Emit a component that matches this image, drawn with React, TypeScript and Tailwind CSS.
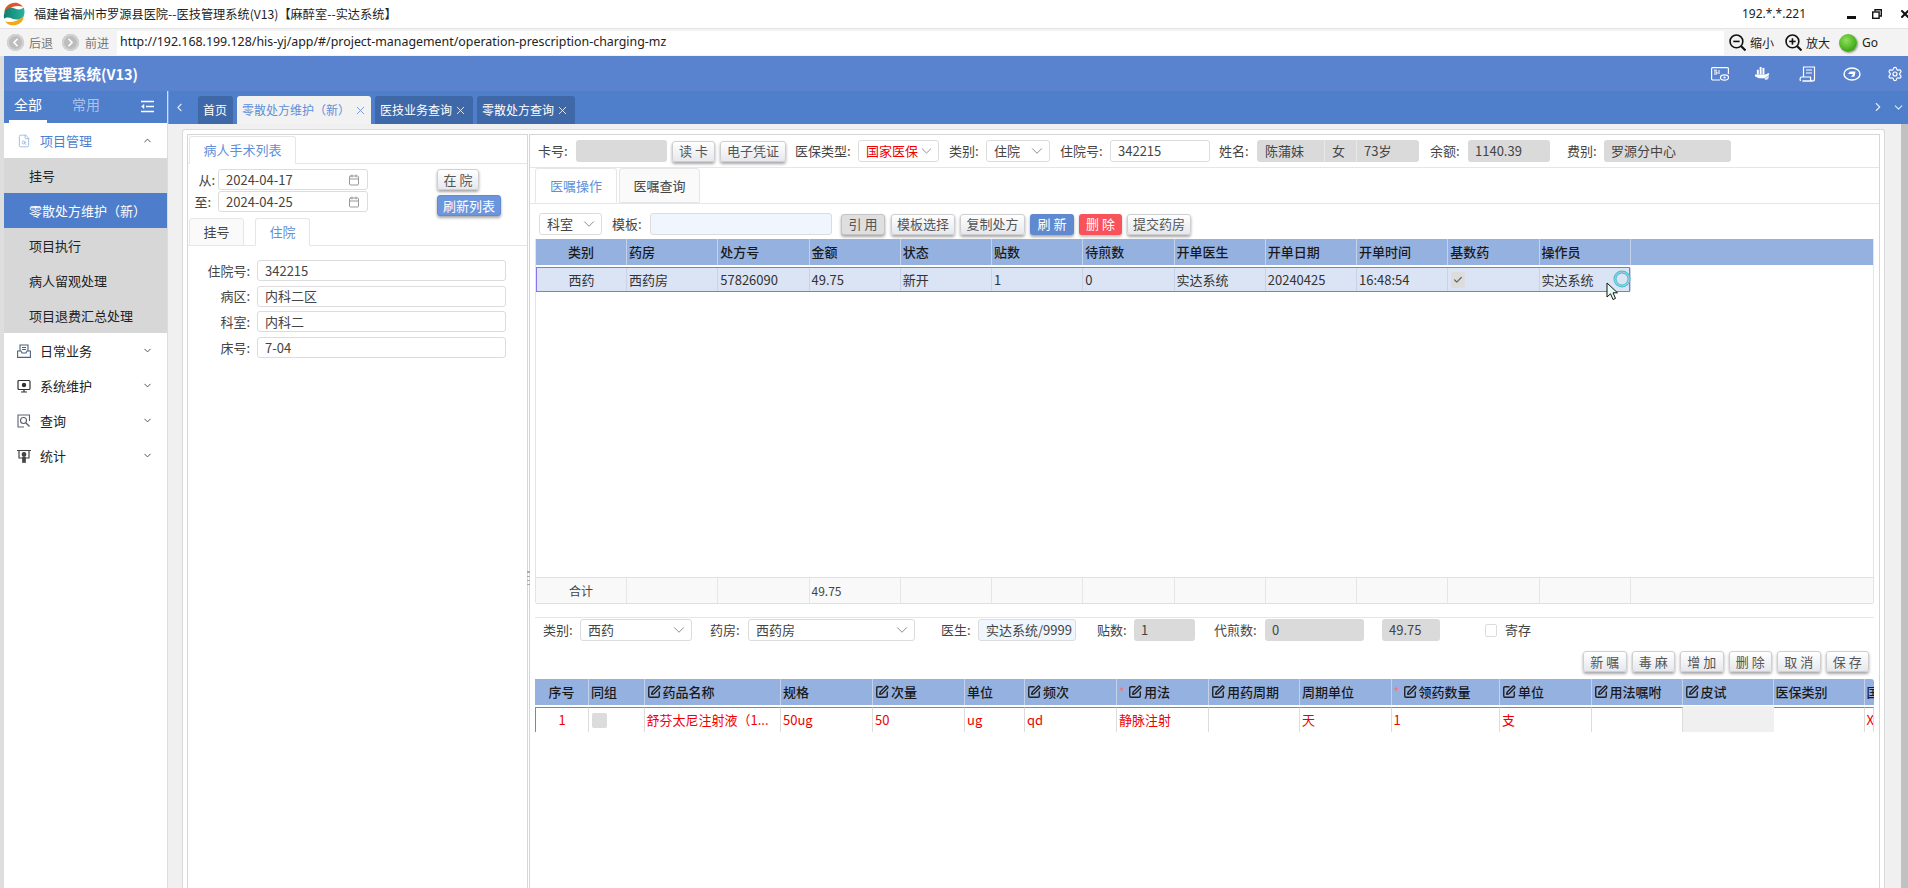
import React from 'react';
import { Calendar, Check, ChevronDown, ChevronUp, ChevronLeft, ChevronRight, FileSearch, Settings, SquarePen, X } from 'lucide-react';

const BTN_BASE = 'h-[21px] shrink-0 flex items-center justify-center rounded-[3px] border text-[#555] text-[13px] shadow-[0_2px_3px_rgba(0,0,0,0.35)]';
const BTN = `${BTN_BASE} border-[#cfcfcf] bg-gradient-to-b from-white to-[#e6e8ee]`;
const INPUT = 'shrink-0 flex items-center rounded-[3px] border border-[#dcdcdc] px-[7px] text-[13px] whitespace-nowrap';
const GRAY = 'h-[22px] shrink-0 flex items-center rounded-[3px] bg-[#dadada] text-[#444] text-[13px]';
const LABEL = 'shrink-0 text-[#444] text-[13px] whitespace-nowrap';

const Logo = () => (
  <svg viewBox="0 0 30 30" className="w-[24px] h-[24px]">
    <defs>
      <linearGradient id="logoTeal" x1="0" y1="0" x2="1" y2="0">
        <stop offset="0" stopColor="#0f7f6e" />
        <stop offset="1" stopColor="#27b3a0" />
      </linearGradient>
    </defs>
    <path d="M3 13C3 5 11 0 18 1C22 2 25 4 26 6C20 4 13 5 9 9C7 11 4 14 3 13Z" fill="#e2552b" />
    <path d="M3 14C4 8 11 6 16 8C20 10 24 10 27 7C29 11 28 16 27 18C24 22 18 23 13 21C9 19 5 19 3 21C2 19 2 16 3 14Z" fill="url(#logoTeal)" />
    <path d="M27 19C27 25 19 30 12 29C8 28.5 5 26 4 24C10 26 17 25 21 22C23 20.5 26 18 27 19Z" fill="#f2a81d" />
  </svg>
);

const NavBall = ({ dir }: { dir: 'l' | 'r' }) => (
  <span className="w-[17px] h-[17px] rounded-full bg-[#bdbdbd] shadow-[inset_0_0_0_2px_#d2d2d2] flex items-center justify-center text-white">
    {dir === 'l' ? <ChevronLeft size={13} strokeWidth={3} /> : <ChevronRight size={13} strokeWidth={3} />}
  </span>
);

const Zoom = ({ plus }: { plus?: boolean }) => (
  <svg viewBox="0 0 16 16" className="w-[17px] h-[17px]" fill="none" stroke="#111" strokeWidth="1.5">
    <circle cx="7" cy="7" r="6" />
    <path d="M11.5 11.5L15.5 15.5" strokeWidth="2" />
    <path d="M4 7H10" />
    {plus && <path d="M7 4V10" />}
  </svg>
);

const TitleBar = () => (
  <div className="h-[28px] flex items-center bg-white">
    <span className="ml-[2px] flex"><Logo /></span>
    <span className="ml-[8px] text-[12.2px] text-[#222] whitespace-nowrap">福建省福州市罗源县医院--医技管理系统(V13)【麻醉室--实达系统】</span>
    <span className="ml-auto text-[12px] text-[#222] font-['Noto_Sans',sans-serif]">192.*.*.221</span>
    <span className="ml-[41px] w-[9px] h-[3px] mt-[7px] bg-[#111]" />
    <svg viewBox="0 0 10 10" className="ml-[16px] w-[10px] h-[10px]" fill="none" stroke="#111" strokeWidth="1.4">
      <path d="M3 2.5V0.7H9.3V7H7.3" />
      <rect x="0.7" y="3" width="6.4" height="6.3" />
    </svg>
    <X size={12} strokeWidth={4} className="ml-[17px] mr-[-3px] text-[#111]" />
  </div>
);

const AddressBar = () => (
  <div className="h-[28px] flex items-center bg-[#f3f3f3] border-t border-[#e4e4e4] text-[13px]">
    <span className="ml-[7px]"><NavBall dir="l" /></span>
    <span className="ml-[5px] w-[24px] text-[#777] whitespace-nowrap text-[12px]">后退</span>
    <span className="ml-[9px]"><NavBall dir="r" /></span>
    <span className="ml-[6px] w-[24px] text-[#777] whitespace-nowrap text-[12px]">前进</span>
    <div className="ml-[8px] w-[1607px] h-[24px] bg-white flex items-center pl-[3px] text-[#222] font-['Noto_Sans',sans-serif] text-[12.4px] whitespace-nowrap">
      http://192.168.199.128/his-yj/app/#/project-management/operation-prescription-charging-mz
    </div>
    <span className="ml-[5px]"><Zoom /></span>
    <span className="ml-[4px] text-[12px] text-[#222] whitespace-nowrap">缩小</span>
    <span className="ml-[11px]"><Zoom plus /></span>
    <span className="ml-[4px] text-[12px] text-[#222] whitespace-nowrap">放大</span>
    <span className="ml-[9px] w-[18px] h-[18px] rounded-full bg-[radial-gradient(circle_at_40%_35%,#8fe05a,#3da814_70%,#2a7d0c)] shadow-[1px_1px_2px_rgba(0,0,0,0.4)]" />
    <span className="ml-[5px] text-[12px] text-[#222] font-['Noto_Sans',sans-serif]">Go</span>
  </div>
);

const HeaderIcons = () => (
  <div className="ml-auto flex items-center text-white">
    <svg viewBox="0 0 18 14" className="w-[18px] h-[14px]" fill="none" stroke="white" strokeWidth="1.2">
      <path d="M9 13H1.5A1 1 0 0 1 .6 12V1.5A1 1 0 0 1 1.5 .6H16.5A1 1 0 0 1 17.4 1.5V7" />
      <path d="M3 3.2H6M3 5H6V7H3" strokeWidth="1" />
      <path d="M8 3V7" strokeWidth="1" />
      <ellipse cx="13.5" cy="10.5" rx="4" ry="2.6" fill="#5983cf" />
      <circle cx="13.5" cy="10.5" r="1.1" fill="white" stroke="none" />
    </svg>
    <svg viewBox="0 0 16 16" className="ml-[26px] w-[15px] h-[15px]" fill="white">
      <rect x="2" y="4" width="2" height="5" />
      <rect x="5" y="1" width="2" height="8" />
      <rect x="8" y="2" width="2" height="7" />
      <path d="M0 9H11L15 7.5V9.5L10 13H4L0 11Z" />
      <path d="M10 13L15 10L14 14L11 15Z" opacity=".8" />
    </svg>
    <svg viewBox="0 0 16 16" className="ml-[29px] w-[17px] h-[16px]" fill="none" stroke="white" strokeWidth="1.2">
      <path d="M4 11V1H15V13A2 2 0 0 1 13 15H3" />
      <path d="M1 15C.2 13 .6 11.3 2 11H11V13C11 14 11.6 15 13 15H3" />
      <path d="M6.5 4H12.5M6.5 7H12.5" />
    </svg>
    <svg viewBox="0 0 18 14" className="ml-[27px] w-[18px] h-[14px]" fill="none" stroke="white" strokeWidth="1.4">
      <ellipse cx="9" cy="7" rx="8" ry="6" />
      <path d="M12.5 4.5H7L5 7H10L8 10L11.5 9.5Z" fill="white" stroke="none" />
    </svg>
    <Settings size={16} strokeWidth={1.8} className="ml-[26px] mr-[5px]" />
  </div>
);

const subItems = ['挂号', '零散处方维护（新）', '项目执行', '病人留观处理', '项目退费汇总处理'];

const DailyIcon = () => (
  <svg viewBox="0 0 14 14" className="w-[14px] h-[14px]" fill="none" stroke="#4f5f85" strokeWidth="1.1">
    <path d="M3 7V1H11V7" />
    <path d="M5 3.5H9M5 5.5H9" />
    <path d="M.6 7H4L5 9H9L10 7H13.4V13.4H.6Z" />
  </svg>
);
const MaintainIcon = () => (
  <svg viewBox="0 0 14 14" className="w-[14px] h-[14px]" fill="none" stroke="#333" strokeWidth="1.2">
    <rect x="1" y="1.5" width="12" height="9" rx="1" />
    <circle cx="7" cy="6" r="1.6" fill="#333" />
    <path d="M4 13H10M7 10.5V13" />
  </svg>
);
const QueryIcon = () => (
  <svg viewBox="0 0 14 14" className="w-[14px] h-[14px]" fill="none" stroke="#5a6270" strokeWidth="1.1">
    <path d="M12.5 7V1H1V13H7" />
    <circle cx="6.5" cy="6.5" r="3" />
    <path d="M9 9L12.5 12.5" strokeWidth="1.4" />
  </svg>
);
const StatIcon = () => (
  <svg viewBox="0 0 14 14" className="w-[14px] h-[14px]" fill="none" stroke="#444" strokeWidth="1.2">
    <path d="M0 1.5H14M2 1.5V9H12V1.5" />
    <circle cx="7" cy="5.5" r="1.8" fill="#444" />
    <path d="M5.8 8V13.5L7 12.5L8.2 13.5V8" fill="#444" />
  </svg>
);

const groups = [
  { name: '日常业务', icon: <DailyIcon /> },
  { name: '系统维护', icon: <MaintainIcon /> },
  { name: '查询', icon: <QueryIcon /> },
  { name: '统计', icon: <StatIcon /> },
];

const Sidebar = () => (
  <div className="w-[164px] shrink-0 flex flex-col bg-white border-r border-[#dcdcdc]">
    <div className="h-[32px] shrink-0 flex items-end bg-[#4f7ecb] text-[14px]">
      <div className="ml-[5px] w-[38px] h-[29px] border-b-[3px] border-white text-white text-center">全部</div>
      <div className="ml-[25px] text-[#a9c3ee] h-[29px]">常用</div>
      <svg viewBox="0 0 13 13" className="ml-auto mr-[13px] mb-[10px] w-[13px] h-[13px]" stroke="white" strokeWidth="1.6">
        <path d="M0 1.5H13M5 6.5H13M0 11.5H13" />
        <path d="M3 4.5L.5 6.5L3 8.5Z" fill="white" strokeWidth="0.5" />
      </svg>
    </div>
    <div className="h-[35px] shrink-0 flex items-center text-[#4d7fd0] text-[13px]">
      <FileSearch size={14} strokeWidth={1.4} className="ml-[13px] text-[#8fb0e2]" />
      <span className="ml-[9px]">项目管理</span>
      <ChevronUp size={11} className="ml-auto mr-[14px] text-[#444]" />
    </div>
    {subItems.map((t, i) => (
      <div key={t} className={`h-[35px] shrink-0 flex items-center pl-[25px] text-[13px] whitespace-nowrap ${i === 1 ? 'bg-[#4e7ecb] text-white' : 'bg-[#d7d7d7] text-[#222]'}`}>{t}</div>
    ))}
    {groups.map((g) => (
      <div key={g.name} className="h-[35px] shrink-0 flex items-center text-[#222] text-[13px]">
        <span className="ml-[13px] flex">{g.icon}</span>
        <span className="ml-[9px]">{g.name}</span>
        <ChevronDown size={11} className="ml-auto mr-[14px] text-[#444]" />
      </div>
    ))}
  </div>
);

const PageTab = ({ label, active, close, w }: { label: string; active?: boolean; close?: boolean; w: string }) => (
  <div className={`h-[28px] shrink-0 flex items-center pl-[5px] rounded-t-[3px] text-[12px] whitespace-nowrap ${w} ${active ? 'bg-[#f2f2f2] text-[#5f8fd9]' : 'bg-[#3e68a8] text-white'}`}>
    <span>{label}</span>
    {close && <X size={13} strokeWidth={1.5} className={`${active ? 'ml-[4px]' : 'ml-[2px]'}`} />}
  </div>
);

const TabStrip = () => (
  <div className="h-[33px] shrink-0 flex items-end bg-[#4f7ecb] border-l border-[#7a9cd8]">
    <ChevronLeft size={13} className="ml-[4px] mb-[10px] text-[#dfe8f7]" />
    <div className="ml-[12px] flex gap-[4px]">
      <PageTab label="首页" w="w-[35px]" />
      <PageTab label="零散处方维护（新）" active close w="w-[134px]" />
      <PageTab label="医技业务查询" close w="w-[98px]" />
      <PageTab label="零散处方查询" close w="w-[98px]" />
    </div>
    <ChevronRight size={14} className="ml-auto mb-[10px] text-[#dfe8f7]" />
    <ChevronDown size={13} className="ml-[7px] mr-[3px] mb-[10px] text-[#dfe8f7]" />
  </div>
);

const SmallTab = ({ label, active, w }: { label: string; active?: boolean; w: string }) => (
  <div className={`h-[28px] shrink-0 flex items-center justify-center rounded-t-[3px] border border-[#e6e6e6] text-[13px] mb-[-1px] ${w} ${active ? 'bg-white border-b-white text-[#5f8fd9]' : 'bg-[#fafafa] text-[#444]'}`}>{label}</div>
);

const LeftPane = () => (
  <div className="w-[341px] shrink-0 border-x border-t border-[#d6d6d6] bg-white">
    <div className="mt-[1px] pl-[1px] flex border-b border-[#e6e6e6]">
      <SmallTab label="病人手术列表" active w="w-[107px]" />
    </div>
    <div className="mt-[5px] flex">
      <div className="flex flex-col gap-[1px]">
        <div className="flex items-center">
          <span className={`${LABEL} w-[30px] text-right pr-[3px]`}>从:</span>
          <div className={`${INPUT} h-[21px] w-[150px] bg-white text-[#444]`}>
            2024-04-17
            <Calendar size={12} className="ml-auto text-[#999]" />
          </div>
        </div>
        <div className="flex items-center">
          <span className={`${LABEL} w-[30px] text-right pr-[7px]`}>至:</span>
          <div className={`${INPUT} h-[21px] w-[150px] bg-white text-[#444]`}>
            2024-04-25
            <Calendar size={12} className="ml-auto text-[#999]" />
          </div>
        </div>
      </div>
      <div className="ml-[69px] flex flex-col items-start gap-[5px]">
        <div className={`${BTN} w-[42px]`}>在 院</div>
        <div className="h-[21px] w-[64px] flex items-center justify-center rounded-[3px] border border-[#5f8bd6] bg-[#6c95dc] text-white text-[13px] shadow-[0_2px_3px_rgba(0,0,0,0.35)]">刷新列表</div>
      </div>
    </div>
    <div className="mt-[2px] pl-[1px] flex gap-[11px] border-b border-[#e6e6e6]">
      <SmallTab label="挂号" w="w-[55px]" />
      <SmallTab label="住院" active w="w-[55px]" />
    </div>
    <div className="pt-[14px] flex flex-col gap-[4.6px]">
      {[['住院号:', '342215'], ['病区:', '内科二区'], ['科室:', '内科二'], ['床号:', '7-04']].map(([k, v]) => (
        <div key={k} className="flex items-center">
          <span className={`${LABEL} w-[69px] text-right pr-[7px]`}>{k}</span>
          <div className={`${INPUT} h-[21px] w-[249px] bg-white text-[#444]`}>{v}</div>
        </div>
      ))}
    </div>
  </div>
);

const Select = ({ value, w, red }: { value: string; w: string; red?: boolean }) => (
  <div className={`${INPUT} h-[22px] bg-white ${w} ${red ? 'text-[#f00000]' : 'text-[#444]'}`}>
    {value}
    <ChevronDown size={18} strokeWidth={1} className="ml-auto mr-[-4px] text-[#666]" />
  </div>
);

const TopBar = () => (
  <div className="h-[33px] pb-[5px] pt-[5px] flex items-center pl-[8px] border-b border-[#e6e6e6]">
    <span className={`${LABEL} w-[31px]`}>卡号:</span>
    <div className={`${GRAY} ml-[7px] w-[91px]`} />
    <div className={`${BTN} ml-[5px] w-[43px]`}>读 卡</div>
    <div className={`${BTN} ml-[5px] w-[66px]`}>电子凭证</div>
    <span className={`${LABEL} ml-[9px] w-[56px]`}>医保类型:</span>
    <span className="ml-[7px]"><Select value="国家医保" w="w-[81px]" red /></span>
    <span className={`${LABEL} ml-[10px] w-[30px]`}>类别:</span>
    <span className="ml-[7px]"><Select value="住院" w="w-[64px]" /></span>
    <span className={`${LABEL} ml-[10px] w-[50px]`}>住院号:</span>
    <div className={`${INPUT} h-[22px] w-[100px] bg-white text-[#444]`}>342215</div>
    <span className={`${LABEL} ml-[9px] w-[31px]`}>姓名:</span>
    <div className={`${GRAY} ml-[7px] w-[162px]`}>
      <span className="w-[68px] pl-[8px] h-full flex items-center border-r border-[#e8e8e8]">陈蒲妹</span>
      <span className="w-[32px] pl-[7px] h-full flex items-center border-r border-[#e8e8e8]">女</span>
      <span className="pl-[7px]">73岁</span>
    </div>
    <span className={`${LABEL} ml-[11px] w-[31px]`}>余额:</span>
    <div className={`${GRAY} ml-[7px] w-[82px] px-[7px]`}>1140.39</div>
    <span className={`${LABEL} ml-[17px] w-[31px]`}>费别:</span>
    <div className={`${GRAY} ml-[6px] w-[127px] px-[7px]`}>罗源分中心</div>
  </div>
);

const Toolbar = () => (
  <div className="mt-[9px] h-[22px] flex items-center pl-[9px]">
    <Select value="科室" w="w-[63px]" />
    <span className={`${LABEL} ml-[10px] w-[31px]`}>模板:</span>
    <div className={`${INPUT} h-[22px] ml-[7px] w-[182px] bg-[#eff6fd]`} />
    <div className={`${BTN_BASE} ml-[9px] w-[44px] bg-[#dfdfdf] border-[#c4c4c4]`}>引 用</div>
    <div className={`${BTN} ml-[6px] w-[64px]`}>模板选择</div>
    <div className={`${BTN} ml-[5px] w-[65px]`}>复制处方</div>
    <div className="ml-[5px] w-[44px] h-[21px] flex items-center justify-center rounded-[3px] bg-[#6089d0] text-white text-[13px] shadow-[0_2px_3px_rgba(0,0,0,0.35)]">刷 新</div>
    <div className="ml-[5px] w-[43px] h-[21px] flex items-center justify-center rounded-[3px] bg-[#f8525a] text-white text-[13px] shadow-[0_2px_3px_rgba(0,0,0,0.25)]">删 除</div>
    <div className={`${BTN} ml-[5px] w-[64px]`}>提交药房</div>
  </div>
);

const orderHead = ['类别', '药房', '处方号', '金额', '状态', '贴数', '待煎数', '开单医生', '开单日期', '开单时间', '基数药', '操作员'];
const orderRow = ['西药', '西药房', '57826090', '49.75', '新开', '1', '0', '实达系统', '20240425', '16:48:54', '', '实达系统'];
const ORDER_COLS = 'grid grid-cols-[91px_repeat(11,91.25px)_1fr]';

const OrderTable = () => (
  <div className="mt-[4px] mx-[5px] h-[365px] flex flex-col border-x border-[#e4e4e4] rounded-b-[3px] text-[13px]">
    <div className={`${ORDER_COLS} h-[26px] shrink-0 bg-[#95b1e0] font-medium text-[#1a1a1a]`}>
      {orderHead.map((h, i) => (
        <div key={h} className={`flex items-center border-r border-[#c4d2ea] ${i === 0 ? 'justify-center' : 'pl-[2px]'}`}>{h}</div>
      ))}
      <div />
    </div>
    <div className="flex-1 pt-[2px]">
      <div className="relative h-[25px] w-[1094px] grid grid-cols-[90px_repeat(11,91.25px)] bg-[#dbe4f5] border border-[#8b71ef] text-[#333]">
        {orderRow.map((c, i) => (
          <div key={i} className={`flex items-center border-r border-[#c9d3e6] last:border-r-0 ${i === 0 ? 'justify-center' : 'pl-[2px]'}`}>
            {i === 10 ? (
              <span className="ml-[1px] w-[14px] h-[16px] rounded-[2px] bg-[#dcdcdc] flex items-center justify-center"><Check size={10} strokeWidth={3} className="text-[#666]" /></span>
            ) : c}
          </div>
        ))}
        <svg viewBox="0 0 20 20" className="absolute right-[-3px] top-[1px] w-[20px] h-[20px]" fill="none">
          <circle cx="10" cy="10" r="7" stroke="#3fc4c4" strokeWidth="3" />
          <circle cx="10" cy="10" r="7" stroke="#a9c7e8" strokeWidth="1.2" />
        </svg>
        <svg viewBox="0 0 12 19" className="absolute right-[11px] top-[14px] w-[12px] h-[19px] z-10">
          <path d="M1 1V15L4.5 11.8L7 17.5L9.5 16.4L7 10.8H11.5Z" fill="#e6fff5" stroke="#111" strokeWidth="1" />
        </svg>
      </div>
    </div>
    <div className={`${ORDER_COLS} h-[27px] shrink-0 bg-[#f9f9f9] border-y border-[#e0e0e0] text-[#444] text-[12px]`}>
      {['合计', '', '', '49.75', '', '', '', '', '', '', '', '', ''].map((c, i) => (
        <div key={i} className={`flex items-center border-r border-[#e6e6e6] last:border-r-0 ${i === 0 ? 'justify-center' : 'pl-[2px]'}`}>{c}</div>
      ))}
    </div>
  </div>
);

const DetailForm = () => (
  <div className="mt-[13px] mx-[5px] border-t border-[#e6e6e6] pt-[1px]">
    <div className="flex items-center h-[22px] pl-[8px]">
      <span className={`${LABEL} w-[30px]`}>类别:</span>
      <span className="ml-[7px]"><Select value="西药" w="w-[112px]" /></span>
      <span className={`${LABEL} ml-[18px] w-[31px]`}>药房:</span>
      <span className="ml-[7px]"><Select value="西药房" w="w-[167px]" /></span>
      <span className={`${LABEL} ml-[26px] w-[31px]`}>医生:</span>
      <div className={`${INPUT} h-[22px] ml-[6px] w-[98px] bg-[#eff6fd] text-[#444]`}>实达系统/9999</div>
      <span className={`${LABEL} ml-[21px] w-[31px]`}>贴数:</span>
      <div className={`${GRAY} ml-[6px] w-[61px] px-[7px]`}>1</div>
      <span className={`${LABEL} ml-[19px] w-[44px]`}>代煎数:</span>
      <div className={`${GRAY} ml-[7px] w-[99px] px-[7px]`}>0</div>
      <div className={`${GRAY} ml-[18px] w-[58px] px-[7px]`}>49.75</div>
      <span className="ml-[45px] w-[12px] h-[13px] rounded-[2px] border border-[#dcdcdc] bg-white" />
      <span className={`${LABEL} ml-[8px]`}>寄存</span>
    </div>
  </div>
);

const detailActions = ['新 嘱', '毒 麻', '增 加', '删 除', '取 消', '保 存'];

const DetailActions = () => (
  <div className="mt-[10px] mr-[10px] flex justify-end gap-[5px]">
    {detailActions.map((a) => (
      <div key={a} className={`${BTN} w-[43.5px]`}>{a}</div>
    ))}
  </div>
);

const detailHead: { t: string; edit?: boolean; req?: boolean; center?: boolean }[] = [
  { t: '序号', center: true },
  { t: '同组' },
  { t: '药品名称', edit: true },
  { t: '规格' },
  { t: '次量', edit: true },
  { t: '单位' },
  { t: '频次', edit: true },
  { t: '用法', edit: true, req: true },
  { t: '用药周期', edit: true },
  { t: '周期单位' },
  { t: '领药数量', edit: true, req: true },
  { t: '单位', edit: true },
  { t: '用法嘱咐', edit: true },
  { t: '皮试', edit: true },
  { t: '医保类别' },
  { t: '国' },
];
const detailRow = ['1', '', '舒芬太尼注射液（1...', '50ug', '50', 'ug', 'qd', '静脉注射', '', '天', '1', '支', '', '', '', 'X'];
const DETAIL_COLS = 'grid grid-cols-[54px_55.5px_136.5px_92px_92px_60px_92px_92px_91px_91.5px_108.5px_91.5px_91px_91px_91px_9px]';

const DetailTable = () => (
  <div className="mt-[7px] mx-[5px] overflow-hidden text-[13px]">
    <div className={`${DETAIL_COLS} h-[26px] bg-[#95b1e0] font-medium text-[#1a1a1a] whitespace-nowrap overflow-hidden rounded-tr-[3px]`}>
      {detailHead.map((h, i) => (
        <div key={i} className={`flex items-center overflow-hidden border-r border-[#c4d2ea] last:border-r-0 ${h.center ? 'justify-center' : 'pl-[2px]'}`}>
          {h.req && <span className="text-[#ee7a86] font-normal mr-[3px]">*</span>}
          {h.edit && <SquarePen size={14} strokeWidth={2.4} className="mr-[2px] shrink-0 text-[#222]" />}
          {h.t}
        </div>
      ))}
    </div>
    <div className={`${DETAIL_COLS} mt-[2px] h-[25px] text-[#f00000] whitespace-nowrap`}>
      {detailRow.map((c, i) => {
        if (i === 13) return <div key={i} className="h-[27px] mt-[-1px] bg-[#f0f0f0] border-b border-[#dcdcdc]" />;
        return (
          <div key={i} className={`flex items-center overflow-hidden border-y border-[#8b71ef] border-r border-r-[#dcdcdc] ${i === 0 ? 'justify-center border-l border-l-[#8b71ef]' : 'pl-[2px]'}`}>
            {i === 1 ? <span className="w-[15px] h-[15px] ml-[1px] rounded-[2px] bg-[#dcdcdc]" /> : c}
          </div>
        );
      })}
    </div>
  </div>
);

const RightPane = () => (
  <div className="relative ml-[1px] flex-1 min-w-0 border-x border-t border-[#d6d6d6] bg-white">
    <span className="absolute left-[-3px] top-[436px] w-[3px] h-[14px] border-y border-[#aaa] bg-[linear-gradient(#aaa_1px,transparent_1px)] bg-[length:3px_4px]" />
    <TopBar />
    <div className="pl-[5px] flex border-b border-[#e6e6e6] gap-[2px]">
      <div className="h-[35px] mb-[-1px] w-[82px] flex items-center justify-center rounded-t-[3px] border border-[#e6e6e6] border-b-white bg-white text-[#5f8fd9] text-[13px]">医嘱操作</div>
      <div className="h-[35px] w-[81px] flex items-center justify-center rounded-t-[3px] border border-[#e6e6e6] bg-[#fafafa] text-[#444] text-[13px]">医嘱查询</div>
    </div>
    <Toolbar />
    <OrderTable />
    <DetailForm />
    <DetailActions />
    <DetailTable />
  </div>
);

export default function App() {
  return (
    <div className="h-[888px] w-[1908px] overflow-hidden flex flex-col bg-white font-['Noto_Sans_CJK_SC','Noto_Sans',sans-serif]">
      <TitleBar />
      <AddressBar />
      <div className="flex-1 min-h-0 flex pl-[4px] bg-[#dedede]">
        <div className="flex-1 min-w-0 flex flex-col">
          <div className="h-[35px] shrink-0 flex items-center bg-[#5983cf] pl-[10px] pr-0">
            <span className="text-white font-bold text-[14.5px] whitespace-nowrap">医技管理系统(V13)</span>
            <HeaderIcons />
          </div>
          <div className="flex-1 min-h-0 flex">
            <Sidebar />
            <div className="flex-1 min-w-0 flex flex-col">
              <TabStrip />
              <div className="flex-1 min-h-0 flex bg-[#f0f0f0]">
                <div className="flex-1 min-w-0 pt-[5px] pl-[14px] pr-[16px]">
                  <div className="h-full flex rounded-t-[3px] border-x border-t border-[#d9d9d9] bg-white pt-[4px] px-[4px]">
                    <LeftPane />
                    <RightPane />
                  </div>
                </div>
                <div className="w-[7px] shrink-0 bg-[#c1c1c1]" />
              </div>
            </div>
          </div>
        </div>
      </div>
    </div>
  );
}
